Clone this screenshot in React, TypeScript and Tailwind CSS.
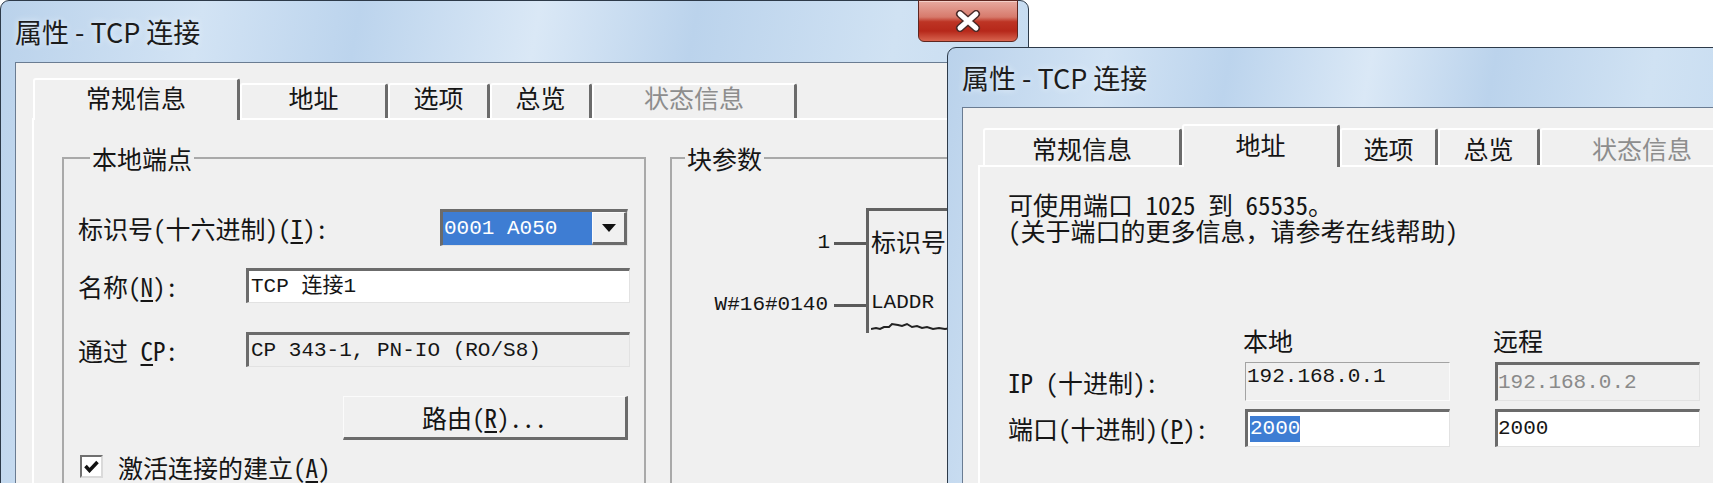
import React from "react";

const ui = "font-['Noto_Sans_Mono_CJK_SC','Noto_Sans_CJK_SC',sans-serif] text-[25px] leading-[28px] text-[#151515]";
const mono = "font-['Liberation_Mono','Noto_Sans_Mono_CJK_SC','Noto_Sans_CJK_SC',monospace] text-[21px] leading-[26px]";
const sunken =
  "border-t-[3px] border-l-[3px] border-r border-b border-t-[#6b6b6b] border-l-[#6b6b6b] border-r-[#e2e2e2] border-b-[#e2e2e2]";
const raised =
  "border-t border-l border-r-[3px] border-b-[3px] border-t-[#fbfbfb] border-l-[#fbfbfb] border-r-[#6b6b6b] border-b-[#6b6b6b]";
const glass =
  "bg-[linear-gradient(100deg,#bad2eb_0%,#d2e3f4_18%,#bcd4ed_32%,#dae8f6_48%,#bbd3ec_62%,#d0e2f3_80%,#c1d8ef_100%)]";

type Tab = { label: string; w: string; off?: boolean };

function TabStrip({
  tabs,
  active,
  className,
  activeCls,
  idleCls,
}: {
  tabs: Tab[];
  active: number;
  className: string;
  activeCls: string;
  idleCls: string;
}) {
  return (
    <div className={`flex items-end ${className}`}>
      {tabs.map((t, i) =>
        i === active ? (
          <div
            key={t.label}
            className={`relative z-10 -mb-[2px] flex shrink-0 items-center justify-center rounded-t-[3px] border-l-2 border-r-[3px] border-t-2 border-l-white border-r-[#6b6b6b] border-t-white bg-[#f0f0f0] ${activeCls} ${t.w}`}
          >
            {t.label}
          </div>
        ) : (
          <div
            key={t.label}
            className={`flex shrink-0 items-center justify-center rounded-t-[3px] border-l-2 border-r-[3px] border-t-2 border-l-white border-r-[#6b6b6b] border-t-white ${idleCls} ${t.w} ${
              t.off ? "text-[#8d8d8d]" : ""
            }`}
          >
            {t.label}
          </div>
        )
      )}
    </div>
  );
}

function Window({
  title,
  className,
  titleCls,
  close,
  children,
}: {
  title: string;
  className: string;
  titleCls: string;
  close?: boolean;
  children: React.ReactNode;
}) {
  return (
    <div className={`absolute flex flex-col rounded-t-[9px] border border-[#2d3a49] ${glass} ${className}`}>
      <div className={`relative flex shrink-0 items-center pl-[14px] ${titleCls}`}>
        <span className="font-['Noto_Sans_CJK_SC',sans-serif] text-[27px] leading-[30px] text-[#1c1c1c] [text-shadow:0_0_6px_#eef5fc]">
          {title}
        </span>
        {close && (
          <div className="absolute right-[10px] top-[-1px] flex h-[42px] w-[100px] items-center justify-center rounded-b-[6px] border border-[#5e2620] bg-[linear-gradient(180deg,#e7aaa0_0%,#d77a6c_40%,#bd3424_52%,#b6281a_75%,#d8644f_100%)] shadow-[inset_0_1px_0_#f4cfc8]">
            <svg width="28" height="22" viewBox="0 0 28 22">
              <path d="M6 4 L22 18 M22 4 L6 18" stroke="#4a2a28" strokeWidth="8" strokeLinecap="round" />
              <path d="M6 4 L22 18 M22 4 L6 18" stroke="#ffffff" strokeWidth="5" strokeLinecap="round" />
            </svg>
          </div>
        )}
      </div>
      <div className="ml-[14px] flex-1 border-l border-t border-[#6a7c92] bg-[#f0f0f0]">{children}</div>
    </div>
  );
}

function U({ children }: { children: React.ReactNode }) {
  return <span className="underline underline-offset-[3px]">{children}</span>;
}

function LeftDialog() {
  return (
    <Window title="属性 - TCP 连接" className="left-0 top-0 h-[560px] w-[1029px]" titleCls="h-[61px]" close>
      <div className={`pl-[16px] pt-[15px] ${ui}`}>
        <TabStrip
          className="ml-[1px] h-[40px]"
          active={0}
          activeCls="h-[42px] pb-[6px]"
          idleCls="h-[35px] pb-[9px]"
          tabs={[
            { label: "常规信息", w: "w-[207px]" },
            { label: "地址", w: "w-[148px]" },
            { label: "选项", w: "w-[102px]" },
            { label: "总览", w: "w-[102px]" },
            { label: "状态信息", w: "w-[205px]", off: true },
          ]}
        />
        <div className="flex h-[400px] items-start border-l-2 border-t-2 border-white pl-[28px] pt-[24px]">
          <fieldset className="w-[584px] shrink-0 border-2 border-[#a9a9a9] px-[14px] pb-[30px] pt-[37px]">
            <legend className="ml-[12px] px-[2px] leading-[28px]">本地端点</legend>
            <div className="flex flex-col">
              <div className="flex h-[37px] items-center justify-between">
                <span>
                  标识号(十六进制)(<U>I</U>):
                </span>
                <div className={`mr-[2px] flex h-[37px] w-[188px] ${sunken} bg-white`}>
                  <div className={`flex flex-1 items-center bg-[#3e7dd3] pl-[1px] text-white ${mono}`}>0001 A050</div>
                  <div className={`flex w-[35px] items-center justify-center bg-[#f0f0f0] ${raised}`}>
                    <svg width="14" height="8" viewBox="0 0 14 8">
                      <path d="M0 0 H14 L7 8 Z" fill="#111" />
                    </svg>
                  </div>
                </div>
              </div>
              <div className="mt-[22px] flex h-[35px] items-center">
                <span className="w-[168px] shrink-0">
                  名称(<U>N</U>):
                </span>
                <div className={`flex h-[35px] flex-1 items-center bg-white pl-[2px] ${sunken} ${mono}`}>TCP 连接1</div>
              </div>
              <div className="mt-[29px] flex h-[35px] items-center">
                <span className="w-[168px] shrink-0">
                  通过 <U>C</U>P:
                </span>
                <div className={`flex h-[35px] flex-1 items-center bg-[#efefef] pl-[2px] ${sunken} ${mono}`}>
                  CP 343-1, PN-IO (RO/S8)
                </div>
              </div>
              <div
                className={`mr-[2px] mt-[29px] flex h-[44px] w-[285px] items-center justify-center self-end bg-[#f0f0f0] ${raised}`}
              >
                路由(<U>R</U>)...
              </div>
              <div className="mt-[15px] flex h-[23px] items-center">
                <div className="ml-[2px] flex h-[23px] w-[23px] items-center justify-center border-2 border-b-[#dadada] border-l-[#707070] border-r-[#dadada] border-t-[#707070] bg-white">
                  <svg width="15" height="13" viewBox="0 0 15 13">
                    <path d="M1.5 6 L5.5 10.5 L13.5 2" stroke="#111" strokeWidth="3.5" fill="none" />
                  </svg>
                </div>
                <span className="ml-[15px]">
                  激活连接的建立(<U>A</U>)
                </span>
              </div>
            </div>
          </fieldset>
          <fieldset className="ml-[24px] h-[380px] w-[420px] shrink-0 border-2 border-[#a9a9a9] pt-[36px]">
            <legend className="ml-[13px] px-[2px] leading-[28px]">块参数</legend>
            <div className="flex">
              <div className={`flex w-[194px] flex-col items-end pt-[20px] ${mono}`}>
                <div className="flex h-[30px] items-center">
                  1<span className="ml-[4px] h-[3px] w-[32px] bg-[#5a5a5a]" />
                </div>
                <div className="mt-[32px] flex h-[30px] items-center">
                  W#16#0140<span className="ml-[6px] h-[3px] w-[32px] bg-[#5a5a5a]" />
                </div>
              </div>
              <div className="flex h-[125px] w-[140px] flex-col border-l-[3px] border-t-[3px] border-[#626262] pl-[2px] pt-[15px]">
                <div className="flex h-[30px] items-center">标识号</div>
                <div className={`mt-[32px] flex h-[30px] items-center ${mono}`}>LADDR</div>
                <svg width="90" height="12" viewBox="0 0 90 12" className="mt-[2px]">
                  <polyline
                    points="0,9 5,8 9,9 13,7 18,7 21,4 27,5 31,6 36,4 41,7 46,6 51,8 56,7 62,9 68,8 74,9 80,8 90,8"
                    fill="none"
                    stroke="#222"
                    strokeWidth="2"
                  />
                </svg>
              </div>
            </div>
          </fieldset>
        </div>
      </div>
    </Window>
  );
}

function RightDialog() {
  return (
    <Window title="属性 - TCP 连接" className="left-[947px] top-[47px] h-[500px] w-[800px]" titleCls="h-[59px]">
      <div className={`pl-[15px] pt-[16px] ${ui}`}>
        <TabStrip
          className="ml-[5px] h-[41px]"
          active={1}
          activeCls="h-[43px] pb-[6px]"
          idleCls="h-[37px]"
          tabs={[
            { label: "常规信息", w: "w-[199px]" },
            { label: "地址", w: "w-[158px]" },
            { label: "选项", w: "w-[98px]" },
            { label: "总览", w: "w-[102px]" },
            { label: "状态信息", w: "w-[205px]", off: true },
          ]}
        />
        <div className="h-[360px] border-l-2 border-t-2 border-white pl-[28px] pt-[24px]">
          <p className="leading-[26px]">
            可使用端口 1025 到 65535。
            <br />
            (关于端口的更多信息，请参考在线帮助)
          </p>
          <div className="mt-[84px] flex h-[25px] items-center">
            <span className="ml-[235px] w-[250px]">本地</span>
            <span>远程</span>
          </div>
          <div className="mt-[10px] flex h-[39px] items-center">
            <span className="w-[237px] shrink-0">IP (十进制):</span>
            <div
              className={`h-[39px] w-[205px] border-b border-l border-r border-t border-b-[#fafafa] border-l-[#a3a3a3] border-r-[#fafafa] border-t-[#a3a3a3] bg-[#f0f0f0] pl-[1px] pt-[1px] ${mono}`}
            >
              192.168.0.1
            </div>
            <div className={`ml-[45px] flex h-[39px] w-[205px] items-center bg-[#f0f0f0] text-[#8a8a8a] ${sunken} ${mono}`}>
              192.168.0.2
            </div>
          </div>
          <div className="mt-[8px] flex h-[38px] items-center">
            <span className="w-[237px] shrink-0">
              端口(十进制)(<U>P</U>):
            </span>
            <div className={`flex h-[38px] w-[205px] items-center bg-white pl-[2px] ${sunken} ${mono}`}>
              <span className="bg-[#3e7dd3] text-white">2000</span>
            </div>
            <div className={`ml-[45px] flex h-[38px] w-[205px] items-center bg-white ${sunken} ${mono}`}>2000</div>
          </div>
        </div>
      </div>
    </Window>
  );
}

export default function App() {
  return (
    <div className="relative h-[483px] w-[1713px] overflow-hidden bg-white">
      <LeftDialog />
      <RightDialog />
    </div>
  );
}
